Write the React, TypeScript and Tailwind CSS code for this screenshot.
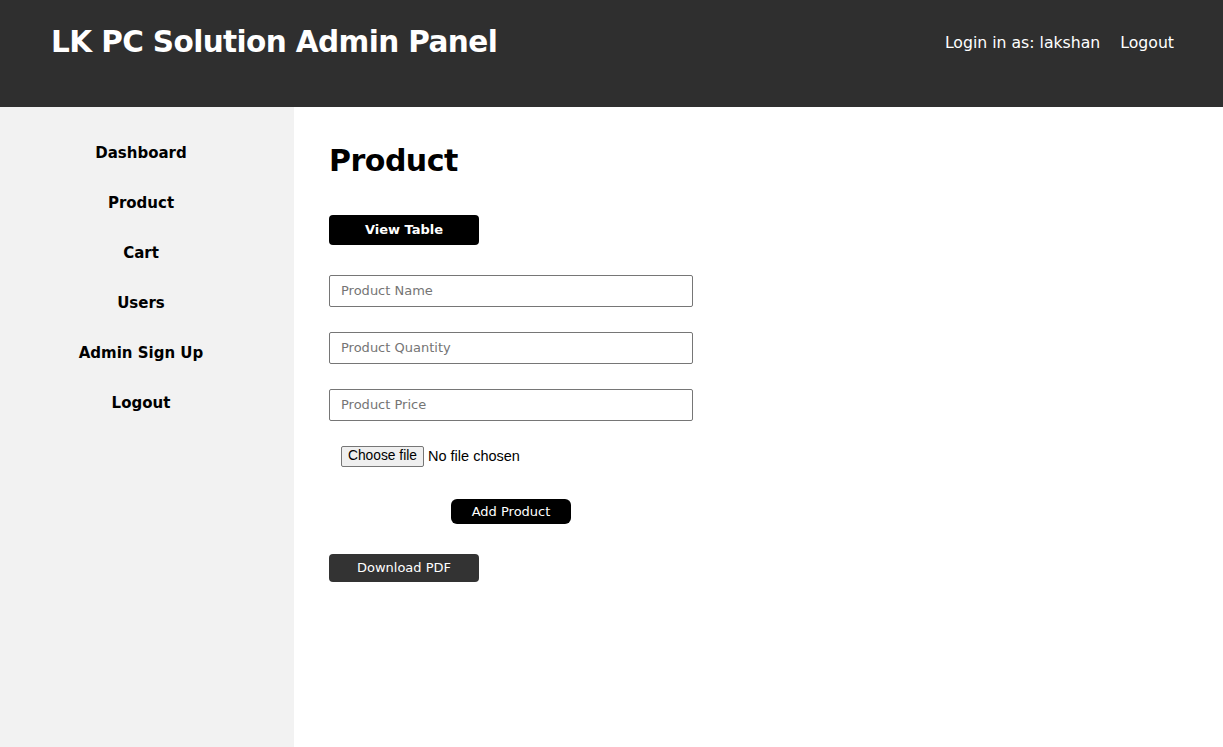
import React from "react";

const font = { fontFamily: '"DejaVu Sans", "Open Sans", sans-serif' };
const arial = { fontFamily: '"Liberation Sans", Arial, sans-serif' };

export default function App() {
  const navItems = ["Dashboard", "Product", "Cart", "Users", "Admin Sign Up", "Logout"];
  return (
    <div className="w-[1223px] h-[747px] flex flex-col bg-white overflow-hidden" style={font}>
      <header className="h-[107px] shrink-0 bg-[#2f2f2f] flex items-center justify-between pl-[51px] pr-[49px] text-white">
        <h1 className="text-[29.5px] font-bold tracking-[-0.6px] leading-none -mt-[22px]">LK PC Solution Admin Panel</h1>
        <div className="flex items-center gap-[20px] text-[15.7px] -mt-[22px]">
          <span>Login in as: lakshan</span>
          <span>Logout</span>
        </div>
      </header>
      <div className="flex flex-1">
        <aside className="w-[294px] shrink-0 bg-[#f2f2f2] pr-[12px]">
          <nav className="flex flex-col items-center pt-[35px] gap-[28px]">
            {navItems.map((n) => (
              <a key={n} className="text-[15px] font-bold text-black leading-[22px]">{n}</a>
            ))}
          </nav>
        </aside>
        <main className="flex-1 pl-[35px] pt-[34px]">
          <h2 className="text-[30px] font-bold text-black leading-[40px] tracking-[-0.5px]">Product</h2>
          <button className="mt-[34px] w-[150px] h-[30px] rounded-[4px] bg-black text-white text-[13px] font-bold flex items-center justify-center">
            View Table
          </button>
          <form className="w-[364px] mt-[30px] flex flex-col">
            {["Product Name", "Product Quantity", "Product Price"].map((p, i) => (
              <input
                key={p}
                placeholder={p}
                className={`h-[32px] w-[364px] border border-[#767676] rounded-[2px] px-[11px] pb-[1px] text-[13px] placeholder:text-[#757575] outline-none ${i > 0 ? "mt-[25px]" : ""}`}
                style={font}
              />
            ))}
            <div className="mt-[25px] pl-[12px] h-[21px] flex items-center gap-[4px] text-black" style={arial}>
              <span className="h-[21px] w-[83px] border border-[#767676] rounded-[2px] bg-[#efefef] flex items-center justify-center text-[13.8px]">Choose file</span>
              <span className="text-[14.5px]">No file chosen</span>
            </div>
            <div className="flex justify-center mt-[32px]">
              <button type="button" className="w-[120px] h-[25px] rounded-[6px] bg-black text-white text-[13px] flex items-center justify-center">
                Add Product
              </button>
            </div>
          </form>
          <button className="mt-[30px] w-[150px] h-[28px] rounded-[4px] bg-[#333333] text-white text-[13px] flex items-center justify-center">
            Download PDF
          </button>
        </main>
      </div>
    </div>
  );
}
